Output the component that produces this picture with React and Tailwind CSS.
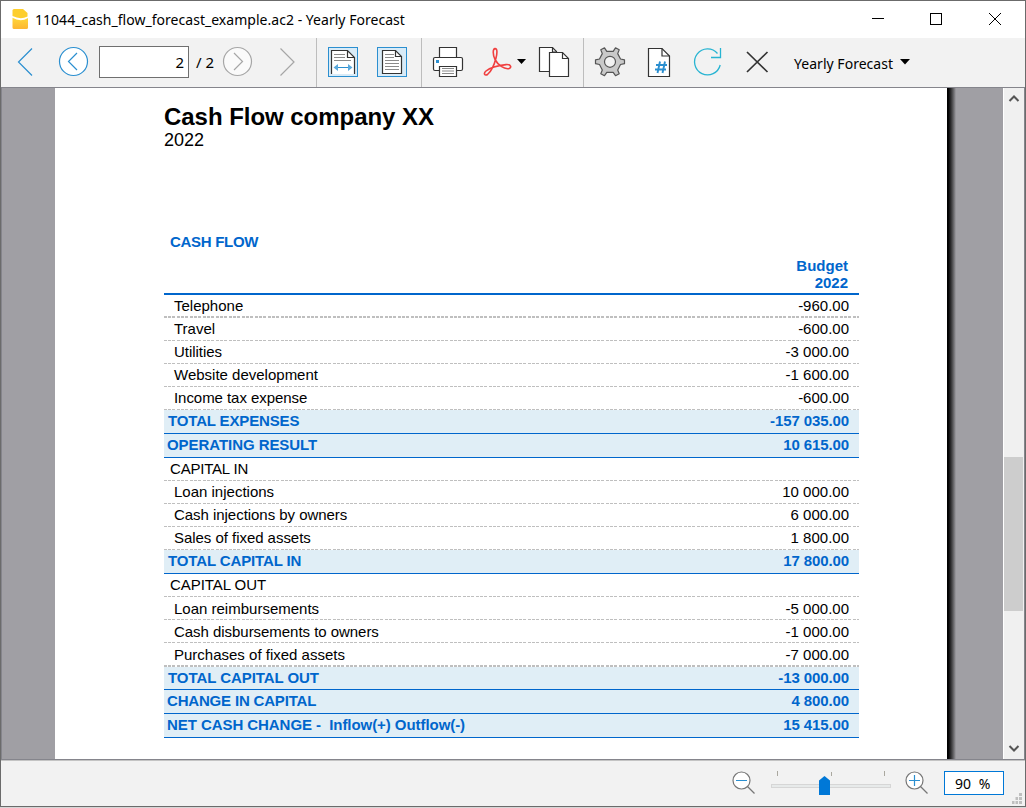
const rows = [
  { label: 'Telephone', value: '-960.00', cls: 'h-[23px] pl-[10px]', track: 'tracking-normal', line: 'double' },
  { label: 'Travel', value: '-600.00', cls: 'h-[23px] pl-[10px]', track: 'tracking-normal', line: 'dash' },
  { label: 'Utilities', value: '-3 000.00', cls: 'h-[23px] pl-[10px]', track: 'tracking-[-0.04px]', line: 'dash' },
  { label: 'Website development', value: '-1 600.00', cls: 'h-[23px] pl-[10px]', track: 'tracking-normal', line: 'dash' },
  { label: 'Income tax expense', value: '-600.00', cls: 'h-[23px] pl-[10px]', track: 'tracking-[-0.05px]', line: 'dash' },
  { label: 'TOTAL EXPENSES', value: '-157 035.00', cls: 'h-[24px] pl-[4px]', track: 'tracking-[-0.15px]', line: 'solid' },
  { label: 'OPERATING RESULT', value: '10 615.00', cls: 'h-[24px] pl-[3px]', track: 'tracking-[-0.06px]', line: 'solid' },
  { label: 'CAPITAL IN', value: '', cls: 'h-[23px] pl-[6px]', track: 'tracking-[-0.2px]', line: 'dash' },
  { label: 'Loan injections', value: '10 000.00', cls: 'h-[23px] pl-[10px]', track: 'tracking-normal', line: 'dash' },
  { label: 'Cash injections by owners', value: '6 000.00', cls: 'h-[23px] pl-[10px]', track: 'tracking-[-0.04px]', line: 'dash' },
  { label: 'Sales of fixed assets', value: '1 800.00', cls: 'h-[23px] pl-[10px]', track: 'tracking-[-0.04px]', line: 'dash' },
  { label: 'TOTAL CAPITAL IN', value: '17 800.00', cls: 'h-[24px] pl-[4px]', track: 'tracking-[-0.13px]', line: 'solid' },
  { label: 'CAPITAL OUT', value: '', cls: 'h-[23px] pl-[6px]', track: 'tracking-[-0.06px]', line: 'dash' },
  { label: 'Loan reimbursements', value: '-5 000.00', cls: 'h-[23px] pl-[10px] pt-px', track: 'tracking-normal', line: 'dash' },
  { label: 'Cash disbursements to owners', value: '-1 000.00', cls: 'h-[23px] pl-[10px] pt-px', track: 'tracking-[-0.04px]', line: 'dash' },
  { label: 'Purchases of fixed assets', value: '-7 000.00', cls: 'h-[24px] pl-[10px] pt-px', track: 'tracking-normal', line: 'double' },
  { label: 'TOTAL CAPITAL OUT', value: '-13 000.00', cls: 'h-[23px] pl-[4px]', track: 'tracking-[-0.06px]', line: 'solid' },
  { label: 'CHANGE IN CAPITAL', value: '4 800.00', cls: 'h-[24px] pl-[3px]', track: 'tracking-[-0.18px]', line: 'solid' },
  { label: 'NET CASH CHANGE -\u00a0 Inflow(+) Outflow(-)', value: '15 415.00', cls: 'h-[24px] pl-[3px]', track: 'tracking-[-0.06px]', line: 'solid' },
];

const dashes =
  'bg-[repeating-linear-gradient(90deg,#bfbfbf_0_3px,transparent_3px_4px,#bfbfbf_4px_7px,transparent_7px_8px,#bfbfbf_8px_11px,transparent_11px_13px)]';

function Row({ row }) {
  const total = row.line === 'solid';
  return (
    <div className={`flex flex-col ${total ? 'bg-[#e0eef6] font-bold text-[#0066cc]' : ''}`}>
      <div className={`flex justify-between pr-[10px] leading-[22px] ${row.cls}`}>
        <span className={`whitespace-pre ${row.track}`}>{row.label}</span>
        <span className={total ? 'tracking-[-0.1px]' : 'tracking-normal'}>{row.value}</span>
      </div>
      <div
        className={
          total
            ? '-mt-px h-px bg-[#0066cc]'
            : row.line === 'double'
              ? `-mt-[2px] h-[2px] ${dashes}`
              : `-mt-px h-px ${dashes}`
        }
      />
    </div>
  );
}

function TitleBar() {
  return (
    <div className="flex h-[37px] shrink-0 items-center bg-white pl-[11px]">
      <svg width="17" height="22" viewBox="0 0 17 22" className="mt-[7px] self-start">
        <defs>
          <linearGradient id="g" x1="0" y1="0" x2="0" y2="1">
            <stop offset="0" stopColor="#ffd83a" />
            <stop offset="1" stopColor="#fdb632" />
          </linearGradient>
        </defs>
        <path d="M2 1H11L15.500 5V8.500Q8.500 12 0.500 8V2.500Q0.500 1 2 1Z" fill="#fdce2d" />
        <path d="M0.500 9.700Q8.500 14.500 16 10V19.500Q16 21 14.500 21H2Q0.500 21 0.500 19.500Z" fill="url(#g)" />
      </svg>
      <span className="ml-[6px] flex-1 whitespace-nowrap font-['Noto_Sans',sans-serif] text-[14px] leading-[20px] tracking-[0.03px] text-black">
        11044_cash_flow_forecast_example.ac2 - Yearly Forecast
      </span>
      <svg className="-mt-px self-start" width="154" height="36" viewBox="871 0 154 36" fill="none" stroke="#000" shapeRendering="crispEdges">
        <path d="M872 18.500H884" />
        <rect x="930.500" y="13.500" width="11" height="11" />
        <path d="M989 13L1001 25M1001 13L989 25" shapeRendering="auto" />
      </svg>
    </div>
  );
}

function Sep({ cls }) {
  return <div className={`-mb-px w-px shrink-0 self-stretch bg-[#bdbdbd] ${cls}`} />;
}

function Toolbar() {
  return (
    <div className="flex h-[49px] shrink-0 items-center bg-[#f2f2f2] pb-px font-['Noto_Sans',sans-serif] text-[15px] text-black">
      <svg className="ml-[14px] shrink-0" width="76" height="32" viewBox="15 46 76 32" fill="none" stroke="#2b8fd0" strokeWidth="1.200">
        <path d="M32 48.500L18.500 62L32 75.500" />
        <circle cx="73.500" cy="61.500" r="14" fill="#fff" />
        <path d="M77 53L68.500 61.500L77 70" />
      </svg>
      <div className="ml-[8px] flex h-[32px] w-[90px] shrink-0 items-center justify-end border border-[#6f6f6f] bg-white pr-[4px] pt-px">2</div>
      <span className="ml-[7px] w-[20px] shrink-0 whitespace-nowrap pt-px">/ 2</span>
      <svg className="ml-[5px] shrink-0" width="76" height="32" viewBox="221 46 76 32" fill="none" stroke="#a6a6a6" strokeWidth="1.200">
        <circle cx="237.500" cy="61.500" r="14" fill="#fafafa" />
        <path d="M234 53L242.500 61.500L234 70" />
        <path d="M280.500 48.500L294 62L280.500 75.500" />
      </svg>
      <Sep cls="ml-[19px]" />
      <svg className="ml-[11px] shrink-0" width="80" height="32" viewBox="328 46 80 32" fill="none">
        <rect x="328.500" y="47.500" width="29" height="29" fill="#d9ebf7" stroke="#2b8fd0" />
        <path d="M331.500 74V50.500H347.500L354.500 57.500V74" fill="#fff" />
        <path d="M331.500 74V50.500H347.500L354.500 57.500V74M347.500 50.500V57.500H354.500" stroke="#333" strokeWidth="1.200" />
        <path d="M334 54.500H345M334 57.500H345M334 60.500H351" stroke="#8a8a8a" />
        <path d="M335 67.500H351" stroke="#2b8fd0" />
        <path d="M333.500 67.500L338 64V71ZM352.500 67.500L348 64V71Z" fill="#5aa9dc" />
        <rect x="377.500" y="47.500" width="29" height="29" fill="#d9ebf7" stroke="#2b8fd0" />
        <path d="M382.500 50.500H395.500L401.500 56.500V73.500H382.500Z" fill="#fff" stroke="#333" strokeWidth="1.200" />
        <path d="M395.500 50.500V56.500H401.500" stroke="#333" strokeWidth="1.200" />
        <path d="M385 54.500H394M385 57.500H394M385 60.500H399M385 63.500H399M385 66.500H399M385 69.500H399" stroke="#8a8a8a" />
      </svg>
      <Sep cls="ml-[13px]" />
      <svg className="ml-[10px] shrink-0" width="142" height="32" viewBox="432 46 142 32" fill="none" stroke="#333">
        <g strokeWidth="1.200" fill="#fff">
          <path d="M439.500 58V47.500H456.500V58" />
          <rect x="433.500" y="57.500" width="29" height="13" rx="1.500" />
          <path d="M439.500 66.500H456.500V76.500H439.500Z" />
        </g>
        <rect x="436" y="60" width="3" height="3" fill="#2b8fd0" stroke="none" />
        <path d="M442 68.500H454M442 71H454M442 73.500H454" stroke="#8a8a8a" />
        <path
          d="M495 59.500C492.500 54 492.800 48.800 495 48.600C497.800 48.500 497 54 496 58C494.500 64 491 71.500 487.500 74.500C485 76.200 483 73.500 486 71C489.500 68.200 498 65.500 506 64.600C511 64.200 512 67.500 509 68.600C504 69.500 498 65 495 59.500Z"
          stroke="#f04040"
          strokeWidth="1.600"
          strokeLinejoin="round"
        />
        <path d="M517 59H526L521.500 64Z" fill="#000" stroke="none" />
        <path d="M539.500 47.500H552.500L556.500 51.500V71.500H539.500Z" fill="#fff" strokeWidth="1.200" />
        <path d="M552.500 47.500V52H557" strokeWidth="1.200" />
        <path d="M549.500 52.500H562.500L568.500 58.500V76.500H549.500Z" fill="#fff" strokeWidth="1.200" />
        <path d="M562.500 52.500V58.500H568.500" strokeWidth="1.200" />
      </svg>
      <Sep cls="ml-[9px]" />
      <svg className="ml-[10px] shrink-0" width="176" height="32" viewBox="594 46 176 32" fill="none">
        <path
          d="M606.800 51.300L604.500 47.800L600.800 49.800L602.300 53.600L599.500 59L595.500 59.800V63.700L599.500 64.500L602.300 70L600.800 73.700L604.500 75.700L606.800 72.400H613.200L615.500 75.700L619.200 73.700L617.700 70L620.500 64.500L624.500 63.700V59.800L620.500 59L617.700 53.600L619.200 49.800L615.500 47.800L613.200 51.300Z"
          fill="#c9c9c9"
          stroke="#555"
          strokeWidth="1.200"
          strokeLinejoin="round"
        />
        <circle cx="610" cy="61.800" r="5.500" fill="#f2f2f2" stroke="#555" strokeWidth="1.200" />
        <path d="M648.500 48.500H662L669.500 56V76.500H648.500Z" fill="#fff" stroke="#333" strokeWidth="1.200" />
        <path d="M662 48.500V56H669.500" stroke="#333" strokeWidth="1.200" />
        <path d="M660 61.500L657.500 73M665 61.500L662.500 73M656 65H667M655 69.500H666" stroke="#2b8fd0" strokeWidth="1.900" />
        <path d="M717.500 53.500A13 13 0 1 0 720.200 65M720.500 48V57.500H711" stroke="#27b4d2" strokeWidth="1.300" />
        <path d="M747 52L767.500 72M767.500 52L747 72" stroke="#333" strokeWidth="1.700" />
      </svg>
      <span className="ml-[24px] w-[99px] whitespace-nowrap pt-[3px] text-[14px] leading-[20px] tracking-[0.03px]">Yearly Forecast</span>
      <svg className="ml-[7px] shrink-0" width="10" height="6" viewBox="0 0 10 6">
        <path d="M0 0H10L5 5.500Z" fill="#000" />
      </svg>
    </div>
  );
}

function ScrollBar() {
  return (
    <div className="flex w-[22px] shrink-0 flex-col items-center border-l border-r border-l-white border-r-[#85858c] bg-[#f0f0f0]">
      <svg className="mt-[6px]" width="12" height="10" viewBox="0 0 12 10" fill="none" stroke="#555" strokeWidth="2">
        <path d="M1.500 7L6 2.500L10.500 7" />
      </svg>
      <div className="mt-[353px] h-[154px] w-[19px] self-start bg-[#cdcdcd]" />
      <svg className="mt-[132px]" width="12" height="10" viewBox="0 0 12 10" fill="none" stroke="#555" strokeWidth="2">
        <path d="M1.500 3L6 7.500L10.500 3" />
      </svg>
    </div>
  );
}

function Report() {
  return (
    <div className="h-[671px] w-[892px] shrink-0 bg-white pl-[109px] pr-[88px] font-['Liberation_Sans',Arial,sans-serif] text-[15px] text-black">
      <h1 className="pt-[15px] text-[24px] font-bold leading-[28px] tracking-[-0.04px]">Cash Flow company XX</h1>
      <div className="text-[18px] leading-[18px]">2022</div>
      <div className="mt-[84px] pl-[6px] font-bold leading-[18px] tracking-[-0.3px] text-[#0066cc]">CASH FLOW</div>
      <div className="mt-[6px] pr-[11px] text-right font-bold leading-[17px] text-[#0066cc]">
        <div>Budget</div>
        <div>2022</div>
      </div>
      <div className="mt-[2px] h-[2px] bg-[#0066cc]" />
      {rows.map((row) => (
        <Row key={row.label} row={row} />
      ))}
    </div>
  );
}

function StatusBar() {
  return (
    <div className="flex h-[46px] shrink-0 items-start justify-end border-t border-[#c4c4c4] bg-[#f2f2f2]">
      <svg className="mt-[6px] shrink-0" width="200" height="32" viewBox="730 767 200 32" fill="none">
        <g stroke="#777" strokeWidth="1.200">
          <circle cx="741.500" cy="780.500" r="8.500" fill="#fff" />
          <path d="M747.500 786.500L754.500 793.500" />
          <circle cx="914.500" cy="780.500" r="8.500" fill="#fff" />
          <path d="M920.500 786.500L927.500 793.500" />
        </g>
        <path d="M736 780.500H747M909 780.500H920M914.500 775V786" stroke="#2b8fd0" strokeWidth="1.200" />
        <rect x="771.500" y="784.500" width="119" height="3" fill="#e7eaea" stroke="#d6d6d6" />
        <path d="M777.500 771V776M831.500 772V776M884.500 771V776" stroke="#aaa89f" />
        <path d="M819 795V780.500L824.500 776L830 780.500V795Z" fill="#0078d7" />
      </svg>
      <div className="ml-[14px] mt-[10px] flex h-[24px] w-[60px] shrink-0 items-center border border-[#0078d7] bg-white pl-[10px] pt-px font-['Noto_Sans',sans-serif] text-[14px] leading-none text-black">
        <span className="whitespace-pre tracking-[0.1px]">90  %</span>
      </div>
      <svg className="mb-[2px] ml-[8px] mr-[3px] self-end" width="10" height="11" viewBox="0 0 10 11" fill="#bfbfbf">
        <path d="M7 0h3v3h-3zM7 4h3v3h-3zM7 8h3v3h-3zM3.500 4h2.500v3h-2.500zM3.500 8h2.500v3h-2.500zM0 8h2.500v3h-2.500z" />
      </svg>
    </div>
  );
}

export default function App() {
  return (
    <div className="h-[808px] w-[1026px] overflow-hidden bg-[#d6d6d6]">
      <div className="flex h-[807px] flex-col border border-[#6b6b6b]">
        <TitleBar />
        <Toolbar />
        <div className="flex h-[673px] shrink-0 border-y border-l border-[#85858c] bg-[#a09fa4]">
          <div className="w-[53px] shrink-0" />
          <Report />
          <div className="w-[9px] shrink-0 bg-linear-to-r from-black to-[#a09fa4]" />
          <div className="flex-1" />
          <ScrollBar />
        </div>
        <StatusBar />
      </div>
    </div>
  );
}
